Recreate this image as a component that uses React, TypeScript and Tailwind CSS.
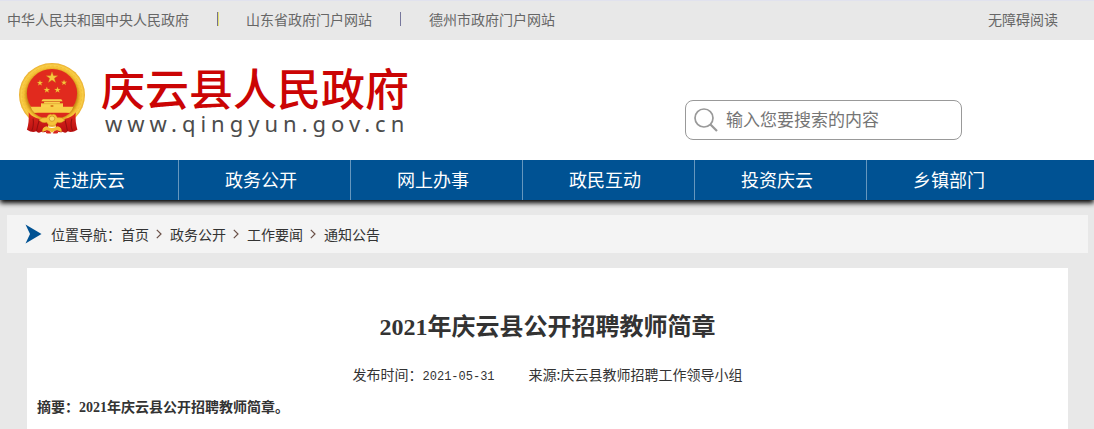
const topLinks = ['中华人民共和国中央人民政府', '山东省政府门户网站', '德州市政府门户网站'];
const navItems = ['走进庆云', '政务公开', '网上办事', '政民互动', '投资庆云', '乡镇部门'];
const crumbs = ['首页', '政务公开', '工作要闻', '通知公告'];

const STAR = 'M0 -10 L2.4 -3.2 L9.5 -3.1 L3.8 1.2 L5.9 8.1 L0 4 L-5.9 8.1 L-3.8 1.2 L-9.5 -3.1 L-2.4 -3.2 Z';

function Emblem() {
  return (
    <svg className="h-[71px] w-[66px] shrink-0" viewBox="26 20 192 213" preserveAspectRatio="none" role="img" aria-label="国徽">
      <defs>
        <radialGradient id="ring" cx="0.5" cy="0.5" r="0.5">
          <stop offset="0.76" stopColor="#c98a16" />
          <stop offset="0.84" stopColor="#f3bd31" />
          <stop offset="0.93" stopColor="#fad04a" />
          <stop offset="1" stopColor="#e8ac2c" />
        </radialGradient>
        <linearGradient id="cloth" x1="0" y1="0" x2="0" y2="1">
          <stop offset="0" stopColor="#e02a1f" />
          <stop offset="1" stopColor="#b90f10" />
        </linearGradient>
      </defs>
      <circle cx="122" cy="116" r="96" fill="url(#ring)" />
      <g fill="none" stroke="#dc9c22" strokeWidth="2" opacity="0.35">
        <circle cx="122" cy="116" r="87" strokeDasharray="7 5" />
        <circle cx="122" cy="116" r="80" strokeDasharray="4 6" />
      </g>
      <circle cx="122" cy="111" r="73" fill="#e12a1e" />
      <path d="M60 151 H184 Q181 162 173 169 H71 Q63 162 60 151 Z" fill="#f8cd48" />
      <path d="M70 170 H174 Q154 188 123 188 Q91 188 70 170 Z" fill="#dc281d" />
      <path d="M95 129 H149 L153 135 H91 Z M99 136 H145 V141 H99 Z M90 141 H154 V153 H90 Z" fill="#f9d14c" />
      <path d="M93 135.500 H151 M91 142 H153" stroke="#c9821b" strokeWidth="1.200" />
      <path d="M118 146 h8 v6 h-8 Z" fill="#db841d" />
      <g fill="#f7c83e" stroke="#c98b1c" strokeWidth="0.600">
        <path d={STAR} transform="translate(122 64) scale(1.750)" />
        <path d={STAR} transform="translate(87 80) scale(0.900)" />
        <path d={STAR} transform="translate(157 79) scale(0.900)" />
        <path d={STAR} transform="translate(107 101) scale(0.950)" />
        <path d={STAR} transform="translate(138 101) scale(0.950)" />
      </g>
      <path
        d="M54 168 Q64 184 87 188 Q105 190 112 200 L108 224 Q99 231 91 226 Q82 233 76 225 Q64 230 49 220 Q56 198 54 168 Z"
        fill="url(#cloth)"
      />
      <path
        d="M191 168 Q181 184 158 188 Q139 190 132 200 L136 224 Q145 231 153 226 Q162 233 168 225 Q180 230 196 220 Q189 198 191 168 Z"
        fill="url(#cloth)"
      />
      <path d="M67 187 Q70 208 63 224 M180 187 Q174 208 182 224 M85 191 Q80 208 77 224 M160 191 Q164 208 167 224" stroke="#93100f" strokeWidth="3" fill="none" />
      <path
        d="M84 191 Q94 182 106 184 Q113 170 122 175 Q131 170 138 184 Q150 182 160 191 Q149 203 137 198 Q132 210 122 208 Q112 210 107 198 Q95 203 84 191 Z"
        fill="#f5c33a"
        stroke="#d4921f"
        strokeWidth="1.500"
      />
      <circle cx="122" cy="187" r="8" fill="#fbdc68" stroke="#c98a1b" strokeWidth="2" />
      <path d="M94 228 Q92 213 106 210 Q121 220 138 210 Q152 213 150 228 Q135 217 122 229 Q108 217 94 228 Z" fill="#f4bd33" />
      <path d="M106 222 Q114 219 120 231 Q112 233 104 230 Z M138 222 Q130 219 124 231 Q132 233 140 230 Z" fill="#d7231b" />
    </svg>
  );
}

function TopBar() {
  return (
    <div className="flex h-10 items-center justify-between border-t border-[#e1e2ee] bg-[#e8e8e8] pr-9 pb-1 pl-[7px] text-[14px] leading-5 text-[#666]">
      <ul className="flex items-center">
        {topLinks.map((label, i) => (
          <li key={label} className="flex items-center">
            {i > 0 && (
              <span
                className={
                  i === 1
                    ? 'mr-[27px] ml-7 h-3.5 w-0.5 border-l border-[#75708f] bg-[#e2e070]'
                    : 'mx-7 h-3.5 w-px bg-[#77779c]'
                }
              />
            )}
            <a href="#">{label}</a>
          </li>
        ))}
      </ul>
      <a href="#">无障碍阅读</a>
    </div>
  );
}

function Header() {
  return (
    <header className="relative z-10 flex h-[120px] justify-between bg-white pr-[132px] pl-[19px]">
      <a href="#" className="flex items-start pt-[23px]">
        <Emblem />
        <span className="flex flex-col pl-4">
          <span className="text-[44px] leading-[48px] font-medium text-[#cb0404]">庆云县人民政府</span>
          <span className="pl-1 font-['Noto_Sans','Liberation_Sans',sans-serif] text-[22px] leading-6 tracking-[5px] text-[#4c4c4c]">
            www.qingyun.gov.cn
          </span>
        </span>
      </a>
      <form className="mt-[60px] flex h-10 w-[277px] items-center gap-2 rounded-lg border border-[#999] px-2">
        <button type="submit" aria-label="搜索" className="shrink-0">
          <svg className="h-6 w-6" viewBox="0 0 24 24" fill="none" stroke="#999" strokeWidth="1.700">
            <circle cx="10" cy="10" r="9" />
            <path d="M16.500 16.500 L23 23" strokeWidth="2.200" />
          </svg>
        </button>
        <input
          type="text"
          aria-label="输入您要搜索的内容"
          placeholder="输入您要搜索的内容"
          className="w-full min-w-0 pb-0.5 text-[17px] leading-6 text-[#333] outline-none placeholder:text-[#757575]"
        />
      </form>
    </header>
  );
}

export default function App() {
  return (
    <div className="min-h-screen bg-[#e8e8e8] font-['Noto_Sans_CJK_SC',sans-serif] text-[#333]">
      <TopBar />
      <Header />
      <nav className="relative flex h-10 bg-[#005293] pl-[7px] shadow-[0_3px_5px_#000]">
        {navItems.map((label, i) => (
          <a
            key={label}
            href="#"
            className={
              i < navItems.length - 1
                ? 'flex w-[172px] items-center border-r border-[#6697be] pb-0.5 pl-[46px] text-[18px] leading-6 text-white'
                : 'flex w-[172px] items-center pb-0.5 pl-[46px] text-[18px] leading-6 text-white'
            }
          >
            {label}
          </a>
        ))}
      </nav>
      <div className="mr-1.5 ml-[7px] pt-[15px]">
        <div className="flex h-[38px] items-center bg-[#f4f4f4] pl-[18px] text-[14px] leading-5">
          <svg className="mr-[9px] h-5 w-[17px]" viewBox="0 0 17 20" aria-hidden="true">
            <path d="M0.500 0.500 L16.500 10 L0.500 19.500 L5 10 Z" fill="#005293" />
          </svg>
          <span>位置导航：</span>
          <ol className="flex">
            {crumbs.map((label, i) => (
              <li key={label} className="flex items-center">
                {i > 0 && (
                  <svg className="mr-2 ml-[7px] h-2.5 w-1.5" viewBox="0 0 6 10" fill="none" stroke="#6b5148" strokeWidth="1.200" aria-hidden="true">
                    <path d="M0.800 0.800 L5 5 L0.800 9.200" />
                  </svg>
                )}
                <a href="#">{label}</a>
              </li>
            ))}
          </ol>
        </div>
        <main className="mx-5 mt-[15px] min-h-[161px] bg-white px-2.5 pt-[43px]">
          <h1 className="text-center font-['Liberation_Serif','Noto_Sans_CJK_SC',serif] text-[24px] leading-8 font-bold">
            2021年庆云县公开招聘教师简章
          </h1>
          <div className="mt-[21px] flex justify-center gap-[34px] text-[14px] leading-5">
            <span>
              发布时间：<time className="font-['Liberation_Mono',monospace] text-[12px]">2021-05-31</time>
            </span>
            <span>来源:庆云县教师招聘工作领导小组</span>
          </div>
          <p className="mt-[11px] font-['Liberation_Serif','Noto_Sans_CJK_SC',serif] text-[14px] leading-5 font-bold">
            摘要：2021年庆云县公开招聘教师简章。
          </p>
        </main>
      </div>
    </div>
  );
}
